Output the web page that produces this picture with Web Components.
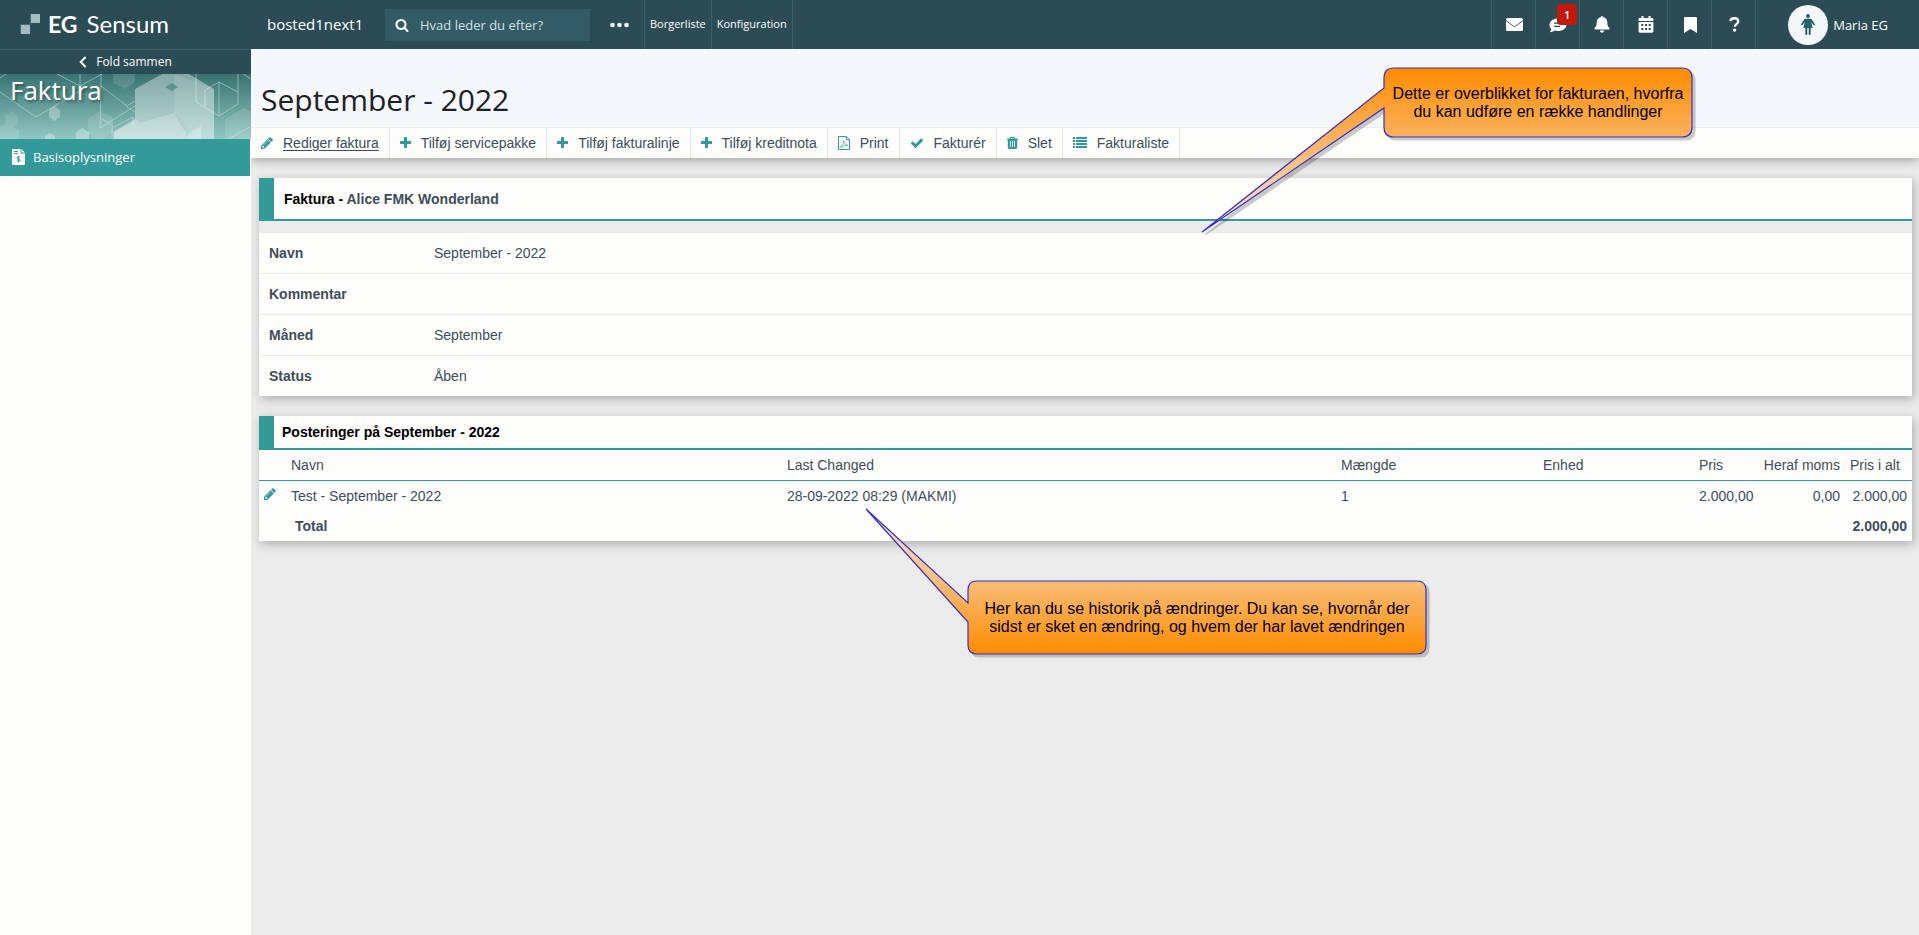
<!DOCTYPE html>
<html lang="da">
<head>
<meta charset="utf-8">
<meta name="viewport" content="width=device-width, initial-scale=1">
<title>EG Sensum - Faktura</title>
<style>
  html, body { margin: 0; height: 100%; }
  body {
    --dark: #2b4b55;
    --line-dark: #3a616b;
    --teal: #339999;
    --paper: #fdfdfb;
    --grey: #ebebeb;
    --ink: #3f4d5a;
    --ui: "Open Sans", sans-serif;
    --body: "Liberation Sans", Arial, sans-serif;
    background: var(--grey);
    color: var(--ink);
    font: 14px/20px var(--body);
  }
</style>
</head>
<body>
<invoice-app></invoice-app>

<script>
const define = (name, html, setup) => {
  const tpl = document.createElement('template');
  tpl.innerHTML = html;
  customElements.define(name, class extends HTMLElement {
    constructor() {
      super();
      this.attachShadow({ mode: 'open' }).append(tpl.content.cloneNode(true));
    }
    connectedCallback() { if (setup) setup(this, this.shadowRoot); }
  });
};

/* name: [width, height, viewBox, markup] */
const ICONS = {
  pencil: [12, 14, '128 0 1536 1792', '<path d="M491 1536l91-91-235-235-91 91v107h128v128h107zm523-928q0-22-22-22-10 0-17 7l-542 542q-7 7-7 17 0 22 22 22 10 0 17-7l542-542q7-7 7-17zm-54-192l416 416-832 832h-416v-416zm683 96q0 53-37 90l-166 166-416-416 166-165q36-38 90-38 53 0 91 38l235 234q37 39 37 91z"/>'],
  plus: [11, 14, '192 0 1408 1792', '<path d="M1600 736v192q0 40-28 68t-68 28h-416v416q0 40-28 68t-68 28h-192q-40 0-68-28t-28-68v-416h-416q-40 0-68-28t-28-68v-192q0-40 28-68t68-28h416v-416q0-40 28-68t68-28h192q40 0 68 28t28 68v416h416q40 0 68 28t28 68z"/>'],
  check: [14, 14, '0 0 1792 1792', '<path d="M1671 566q0 40-28 68l-724 724-136 136q-28 28-68 28t-68-28l-136-136-362-362q-28-28-28-68t28-68l136-136q28-28 68-28t68 28l294 295 656-657q28-28 68-28t68 28l136 136q28 28 28 68z"/>'],
  pdf: [12, 14, '0 0 12 14', '<path fill="none" stroke="currentColor" d="M.5.5h7.800l3.200 3.200v9.800H.5zM8.300.5v3.200h3.200"/><path fill="none" stroke="currentColor" stroke-width=".8" opacity=".8" d="M2.200 11.500c1.600-.8 3.300-4 3.500-7 .5 2.700 1.600 4.500 4.200 4.800-2.700-.3-5 .3-7.700 2.200z"/>'],
  trash: [11, 14, '0 0 11 14', '<path fill-rule="evenodd" d="M3.400 1h4.200l.7 1.500H11v1.200h-.8v7.900c0 .9-.5 1.400-1.300 1.400H2.100c-.8 0-1.300-.5-1.300-1.400V3.700H0V2.500h2.700zm.6.900l-.3.600h3.600L7 1.900zM3 5v6h.8V5zm2.100 0v6h.8V5zm2.100 0v6H8V5z"/>'],
  list: [14, 14, '0 0 14 14', '<path d="M0 1h2v2H0zM3 1h11v2H3zM0 4h2v2H0zM3 4h11v2H3zM0 7h2v2H0zM3 7h11v2H3zM0 10h2v2H0zM3 10h11v2H3z"/>'],
  search: [14, 14, '0 0 1792 1792', '<path d="M1216 832q0-185-131.500-316.500t-316.500-131.500-316.500 131.500-131.500 316.500 131.500 316.500 316.500 131.500 316.500-131.500 131.500-316.500zm512 832q0 52-38 90t-90 38q-54 0-90-38l-343-342q-179 124-399 124-143 0-273.500-55.500t-225-150-150-225-55.500-273.500 55.500-273.500 150-225 225-150 273.500-55.500 273.500 55.500 225 150 150 225 55.500 273.500q0 220-124 399l343 343q37 37 37 90z"/>'],
  dots: [19, 6, '0 0 19 6', '<circle cx="2.500" cy="3" r="2.300"/><circle cx="9.500" cy="3" r="2.300"/><circle cx="16.500" cy="3" r="2.300"/>'],
  chevron: [8, 12, '0 0 8 12', '<path fill="none" stroke="currentColor" stroke-width="1.900" d="M6.600 1L1.700 6l4.900 5"/>'],
  mail: [17, 13, '0 0 17 13', '<rect width="17" height="13" rx="1.500"/><path fill="none" stroke="#2b4b55" stroke-width=".9" d="M0 2.600l6.800 5.200c1 .8 2.400.8 3.400 0L17 2.600"/>'],
  comment: [18, 16, '0 0 18 16', '<path d="M9 1.500c4.700 0 8.500 2.700 8.500 6.200S13.700 14 9 14c-1.100 0-2.200-.2-3.200-.5C4.300 14.600 2.400 15.200.5 15.200c1-.9 1.700-2 1.900-3.200C1.200 10.900.5 9.400.5 7.700.5 4.200 4.300 1.500 9 1.500z"/><path fill="none" stroke="#2b4b55" stroke-width="1.200" d="M5 6.200h8M5 9.300h6"/>'],
  bell: [16, 17, '0 0 16 17', '<path d="M7 .9C7 .3 7.400 0 8 0s1 .3 1 .9c2.600.5 4.300 2.600 4.300 5.300 0 3.400.9 4.500 2 5.600.5.600.7 1.800-.6 1.800H1.300c-1.300 0-1.100-1.200-.6-1.800 1.100-1.100 2-2.200 2-5.600 0-2.700 1.700-4.800 4.300-5.300zM5.900 14.600h4.200c0 1.200-.9 2.100-2.100 2.100s-2.100-.9-2.100-2.100z"/>'],
  calendar: [16, 17, '0 0 16 17', '<path fill-rule="evenodd" d="M3.500 0h2v2h5V0h2v2H14c.8 0 1.400.5 1.400 1.300V5H.6V3.300C.6 2.500 1.200 2 2 2h1.500zM.6 6h14.800v9.300c0 .8-.6 1.400-1.400 1.400H2c-.8 0-1.400-.6-1.400-1.400zm2.700 2v2h2V8zm3.700 0v2h2V8zm3.700 0v2h2V8zm-7.400 4v2h2v-2zM7 12v2h2v-2zm3.700 0v2h2v-2z"/>'],
  bookmark: [13, 16, '0 0 13 16', '<path d="M1.300 0h10.400C12.500 0 13 .5 13 1.300V16l-6.500-3.900L0 16V1.300C0 .5.500 0 1.300 0z"/>'],
  help: [11, 15, '0 0 11 15', '<path fill="none" stroke="currentColor" stroke-width="2.400" d="M1.200 4C1.900 2.100 3.300 1.300 5.200 1.300c2.300 0 4 1.200 4 3.200 0 2.700-3.500 2.500-3.500 5.300"/><circle cx="5.600" cy="13.100" r="1.700"/>'],
  person: [14, 21, '0 0 14 21', '<circle cx="7" cy="2" r="1.900"/><path d="M4.700 4.700h4.600c.7 0 1.200.3 1.600.9l2.900 4.400c.5.900-.8 1.700-1.400.9L10.300 8l1.300 6H9.700v6c0 1.300-2 1.300-2 0v-6H6.300v6c0 1.300-2 1.300-2 0v-6H2.400l1.300-6-2.100 2.900c-.6.800-1.900 0-1.400-.9l2.900-4.400c.4-.6.900-.9 1.600-.9z"/>'],
  invoice: [13, 16, '0 0 13 16', '<path d="M0 1C0 .4.400 0 1 0h7.500v4.500H13V15c0 .6-.4 1-1 1H1c-.6 0-1-.4-1-1zM9.400 0L13 3.600H9.400z"/><path fill="none" stroke="#339999" d="M2 2.500h4M2 4.500h4M8.300 8.300C7.700 7.700 5 7.400 5 8.900c0 1.400 3.200.8 3.200 2.300 0 1.400-2.700 1.300-3.500.6M6.600 6.800v6.600"/>'],
  squares: [20, 20, '0 0 20 20', '<path fill="#a3bcc0" d="M11 0h9v9h-9zM1 11h9v9H1z"/><path fill="#456a74" d="M0 10h11v1H1v9H0zM10 0h1v11h-1z"/>']
};
define('ui-icon', `<style>
  :host { display: inline-flex; flex: none; }
  svg { display: block; fill: currentColor; }
</style>`, (el, root) => {
  const [w, h, box, body] = ICONS[el.getAttribute('name')];
  root.innerHTML += `<svg width="${w}" height="${h}" viewBox="${box}" aria-hidden="true">${body}</svg>`;
});

define('app-header', `<style>
  :host { display: flex; height: 49px; background: var(--dark); color: #fff; font: 13px/20px var(--ui); }
  .logo { display: flex; align-items: center; gap: 8px; box-sizing: border-box; width: 267px; padding: 0 20px 1px; color: inherit; text-decoration: none; font: 24px/30px Lato, sans-serif; }
  .logo b { margin-right: 1px; font-size: 23px; }
  .tenant { display: flex; align-items: center; width: 118px; padding-bottom: 1px; font-size: 15px; }
  form { display: flex; align-items: center; gap: 11px; align-self: center; box-sizing: border-box; width: 205px; height: 32px; padding: 0 10px; background: #325b66; }
  input { min-width: 0; flex: 1; padding: 0; border: 0; outline: 0; background: none; color: #fff; font: 13px/20px var(--ui); }
  input::placeholder { color: #d6e0e3; opacity: 1; }
  button { display: flex; align-items: center; justify-content: center; margin: 0; padding: 0; border: 0; background: none; color: inherit; font: inherit; }
  .more { box-sizing: border-box; width: 55px; padding-left: 4px; border-right: 1px solid var(--line-dark); }
  nav { display: flex; font-size: 11px; font-weight: 500; }
  nav a { display: flex; align-items: center; padding: 0 5px 1px; border-right: 1px solid var(--line-dark); color: inherit; text-decoration: none; }
  .tools { display: flex; margin-left: auto; border-left: 1px solid var(--line-dark); }
  .tools button { position: relative; box-sizing: border-box; width: 44px; padding-left: 1px; border-right: 1px solid var(--line-dark); }
  .badge { position: absolute; top: 4px; left: 21px; width: 20px; height: 21px; border-radius: 4px; background: #c3190d; font: 600 11px/21px var(--ui); text-align: center; }
  .user { gap: 5px; padding: 0 31px 0 32px; }
  .avatar { display: flex; align-items: center; justify-content: center; width: 40px; height: 40px; border-radius: 50%; background: #f3f7fb; color: #1f6466; }
</style>
<a class="logo" href="#"><ui-icon name="squares"></ui-icon><b>EG</b><span>Sensum</span></a>
<div class="tenant">bosted1next1</div>
<form role="search"><ui-icon name="search"></ui-icon><input type="search" aria-label="Søg" placeholder="Hvad leder du efter?"></form>
<button class="more" aria-label="Mere"><ui-icon name="dots"></ui-icon></button>
<nav><a href="#">Borgerliste</a><a href="#">Konfiguration</a></nav>
<div class="tools">
  <button aria-label="Post"><ui-icon name="mail"></ui-icon></button>
  <button aria-label="Beskeder"><ui-icon name="comment"></ui-icon><span class="badge">1</span></button>
  <button aria-label="Notifikationer"><ui-icon name="bell"></ui-icon></button>
  <button aria-label="Kalender"><ui-icon name="calendar"></ui-icon></button>
  <button aria-label="Bogmærker"><ui-icon name="bookmark"></ui-icon></button>
  <button aria-label="Hjælp"><ui-icon name="help"></ui-icon></button>
</div>
<button class="user"><span class="avatar"><ui-icon name="person"></ui-icon></span>Maria EG</button>`);

define('app-sidebar', `<style>
  :host { display: block; background: var(--paper); font: 13px/20px var(--ui); color: #fff; }
  .fold { display: flex; align-items: center; justify-content: center; gap: 9px; box-sizing: border-box; width: 100%; height: 25px; margin: 0; padding: 0 0 1px; border: 0; border-top: 1px solid var(--line-dark); background: var(--dark); color: inherit; font: 12px/20px var(--ui); }
  .banner { display: grid; height: 65px; background: linear-gradient(#38736f, #92c7c3); }
  .banner > * { grid-area: 1 / 1; }
  .banner svg { width: 100%; height: 65px; }
  h2 { margin: 0; padding-left: 10px; font: 26px/32px var(--ui); text-shadow: 2px 2px 3px #0006; }
  .item { display: flex; align-items: center; gap: 8px; box-sizing: border-box; height: 37px; margin-right: 1px; padding: 0 0 1px 12px; background: var(--teal); color: inherit; text-decoration: none; }
</style>
<button class="fold"><ui-icon name="chevron"></ui-icon>Fold sammen</button>
<div class="banner">
  <svg viewBox="0 0 251 65" preserveAspectRatio="xMidYMid slice" aria-hidden="true">
    <g fill="none" stroke="#cfe6e4" stroke-opacity=".5">
      <path d="M0 18l36 25 44-26V0M0 4l6-4M57 0l23 12M80 12L102 0M101 0v12l26 20 8-5M101 12l-1 42 35-22M101 44l12 8M112 65V54l21-11v8M127 33l8 5M196 0v28l23 14 19-12V0M219 8v34M219 8l19 10M219 8l-14 8v16M243 0l8 5M228 65l22-12"/>
    </g>
    <g fill="#fff">
      <path opacity=".38" d="M135 15L162 0h27l25 15v50h-100v-7l21-12z"/>
      <path opacity=".1" d="M174 0l40 15v50h-15l-25-26z"/>
      <path opacity=".22" d="M113 58l22-14 4 5 35-10 15 26h-76z"/>
      <path opacity=".28" d="M188 60l13-8v13h-13z"/>
      <path opacity=".12" d="M113 0h22v8l-10 7-12-6zM5 42l7-4 6 4v8l-6 4-7-4zM88 44l12-7 13 7v14l-10 7H95l-7-6zM0 52l7-3 12 7v9H0zM225 45l19-11 7 4v27h-26z"/>
      <path opacity=".3" d="M49 36l5-4 6 4v7l-6 4-5-4zM76 58l6-4 7 4v7H76zM45 62l5-3 5 3v3H45z"/>
    </g>
    <path fill="#2f6f6b" opacity=".5" d="M165 13l7-4 6 4-6 4z"/>
  </svg>
  <h2>Faktura</h2>
</div>
<nav><a class="item" href="#"><ui-icon name="invoice"></ui-icon>Basisoplysninger</a></nav>`);

define('tool-item', `<style>
  :host { display: flex; border-right: 1px solid #e6e8e8; }
  button { display: flex; align-items: center; gap: 10px; margin: 0; padding: 0 10px 1px; border: 0; background: none; color: inherit; font: inherit; }
  ui-icon { color: var(--teal); }
  :host([active]) span { text-decoration: underline; text-underline-offset: 2px; }
</style>
<button><span><slot></slot></span></button>`, (el, root) => {
  const icon = document.createElement('ui-icon');
  icon.setAttribute('name', el.getAttribute('icon'));
  root.querySelector('button').prepend(icon);
});

define('page-head', `<style>
  :host { display: block; position: relative; background: #f4f7fb; box-shadow: 0 2px 10px #0005; clip-path: inset(0 0 -20px 0); }
  h1 { margin: 0; padding: 29px 10px 6px; color: #1d2125; font: 400 30px/43px var(--ui); }
  .bar { display: flex; height: 30px; border-top: 1px solid #ebedf0; background: var(--paper); }
</style>
<h1><slot name="title"></slot></h1>
<div class="bar"><slot></slot></div>`);

define('panel-card', `<style>
  :host { display: block; box-shadow: 2px 3px 10px #0004; }
  h3 { display: flex; align-items: center; box-sizing: border-box; height: 34px; margin: 0; border-bottom: 2px solid var(--teal); border-left: 15px solid var(--teal); padding-left: 8px; background: var(--paper); color: #000; font-size: 14px; line-height: 20px; }
  :host([large]) h3 { height: 43px; margin-bottom: 12px; padding-left: 10px; }
  :host([large]) { background: var(--grey); }
</style>
<h3><span><slot name="heading"></slot></span></h3>
<slot></slot>`);

define('invoice-details', `<style>
  :host { display: block; background: var(--paper); }
  dl { margin: 0; }
  div { display: grid; grid-template-columns: 165px 1fr; height: 40px; align-items: center; padding-left: 10px; border-bottom: 1px solid #e8e9e9; }
  div:last-child { border: 0; }
  dt { font-weight: bold; }
  dd { margin: 0; }
</style>
<dl>
  <div><dt>Navn</dt><dd>September - 2022</dd></div>
  <div><dt>Kommentar</dt><dd></dd></div>
  <div><dt>Måned</dt><dd>September</dd></div>
  <div><dt>Status</dt><dd>Åben</dd></div>
</dl>`);

define('postings-table', `<style>
  :host { display: block; background: var(--paper); }
  table { width: 100%; table-layout: fixed; border-collapse: separate; border-spacing: 0; }
  th, td { box-sizing: border-box; height: 30px; padding: 0 5px; text-align: left; white-space: nowrap; font-weight: normal; }
  thead th { height: 31px; border-bottom: 1px solid var(--teal); }
  .n { text-align: right; }
  .total th, .total td { font-weight: bold; }
  .total th { padding-left: 9px; }
  .edit { margin: 0; padding: 0 0 4px; border: 0; background: none; color: var(--teal); display: flex; }
</style>
<table>
  <colgroup><col style="width:27px"><col style="width:30%"><col><col style="width:202px"><col style="width:156px"><col style="width:64px"><col style="width:87px"><col style="width:67px"></colgroup>
  <thead><tr><th></th><th>Navn</th><th>Last Changed</th><th>Mængde</th><th>Enhed</th><th>Pris</th><th class="n">Heraf moms</th><th>Pris i alt</th></tr></thead>
  <tbody>
    <tr><td><button class="edit" aria-label="Rediger"><ui-icon name="pencil"></ui-icon></button></td><td>Test - September - 2022</td><td>28-09-2022 08:29 (MAKMI)</td><td>1</td><td></td><td>2.000,00</td><td class="n">0,00</td><td class="n">2.000,00</td></tr>
    <tr class="total"><td></td><th colspan="6">Total</th><td class="n">2.000,00</td></tr>
  </tbody>
</table>`);

/* Speech bubble; the pointer drawing sits behind the text. */
define('note-callout', `<style>
  :host { position: absolute; display: flex; align-items: center; justify-content: center; color: #000; font: 16px/18px var(--body); text-align: center; white-space: nowrap; }
  svg { position: absolute; overflow: visible; filter: drop-shadow(3px 3px 0 #0003); }
  p { position: relative; margin: 0; }
</style>
<svg aria-hidden="true"></svg><p><slot></slot></p>`, (el, root) => {
  const up = el.hasAttribute('up');
  const svg = root.querySelector('svg');
  const [w, h, path] = up
    ? [458, 73, 'M9 0H449Q458 0 458 9V64Q458 73 449 73H9Q0 73 0 64V41L-102-72L0 22V9Q0 0 9 0Z']
    : [308, 69, 'M10 0H298Q308 0 308 10V59Q308 69 298 69H10Q0 69 0 59V40L-182 164L0 20V10Q0 0 10 0Z'];
  svg.setAttribute('width', w);
  svg.setAttribute('height', h);
  svg.style.left = svg.style.top = 0;
  const stops = up
    ? '<stop offset="0" stop-color="#f5ebe6"/><stop offset=".5" stop-color="#f8bd78"/><stop offset="1" stop-color="#ff8c00"/>'
    : '<stop offset="0" stop-color="#ff8c00"/><stop offset=".45" stop-color="#f9b464"/><stop offset="1" stop-color="#f5ebe6"/>';
  svg.innerHTML = `<defs><linearGradient id="g" x2="0" y2="1">${stops}</linearGradient></defs>
    <path d="${path}" fill="url(#g)" stroke="#3a2fc4" stroke-width="1.200"/>`;
});

define('invoice-app', `<style>
  :host { display: grid; position: relative; grid-template: 49px 1fr / 251px 1fr; min-height: 100%; }
  app-header { grid-column: 1 / 3; }
  main { min-width: 0; }
  .content { display: grid; gap: 20px; padding: 20px 7px 20px 8px; }
  .who { color: var(--ink); }
  .overview { left: 1384px; top: 68px; width: 308px; height: 69px; }
  .history { left: 968px; top: 581px; width: 458px; height: 73px; }
</style>
<app-header></app-header>
<app-sidebar></app-sidebar>
<main>
  <page-head>
    <span slot="title">September - 2022</span>
    <tool-item icon="pencil" active>Rediger faktura</tool-item>
    <tool-item icon="plus">Tilføj servicepakke</tool-item>
    <tool-item icon="plus">Tilføj fakturalinje</tool-item>
    <tool-item icon="plus">Tilføj kreditnota</tool-item>
    <tool-item icon="pdf">Print</tool-item>
    <tool-item icon="check">Fakturér</tool-item>
    <tool-item icon="trash">Slet</tool-item>
    <tool-item icon="list">Fakturaliste</tool-item>
  </page-head>
  <div class="content">
    <panel-card large><span slot="heading">Faktura - <span class="who">Alice FMK Wonderland</span></span><invoice-details></invoice-details></panel-card>
    <panel-card><span slot="heading">Posteringer på September - 2022</span><postings-table></postings-table></panel-card>
  </div>
</main>
<note-callout class="overview">Dette er overblikket for fakturaen, hvorfra<br>du kan udføre en række handlinger</note-callout>
<note-callout class="history" up>Her kan du se historik på ændringer. Du kan se, hvornår der<br>sidst er sket en ændring, og hvem der har lavet ændringen</note-callout>`);
</script>
</body>
</html>
